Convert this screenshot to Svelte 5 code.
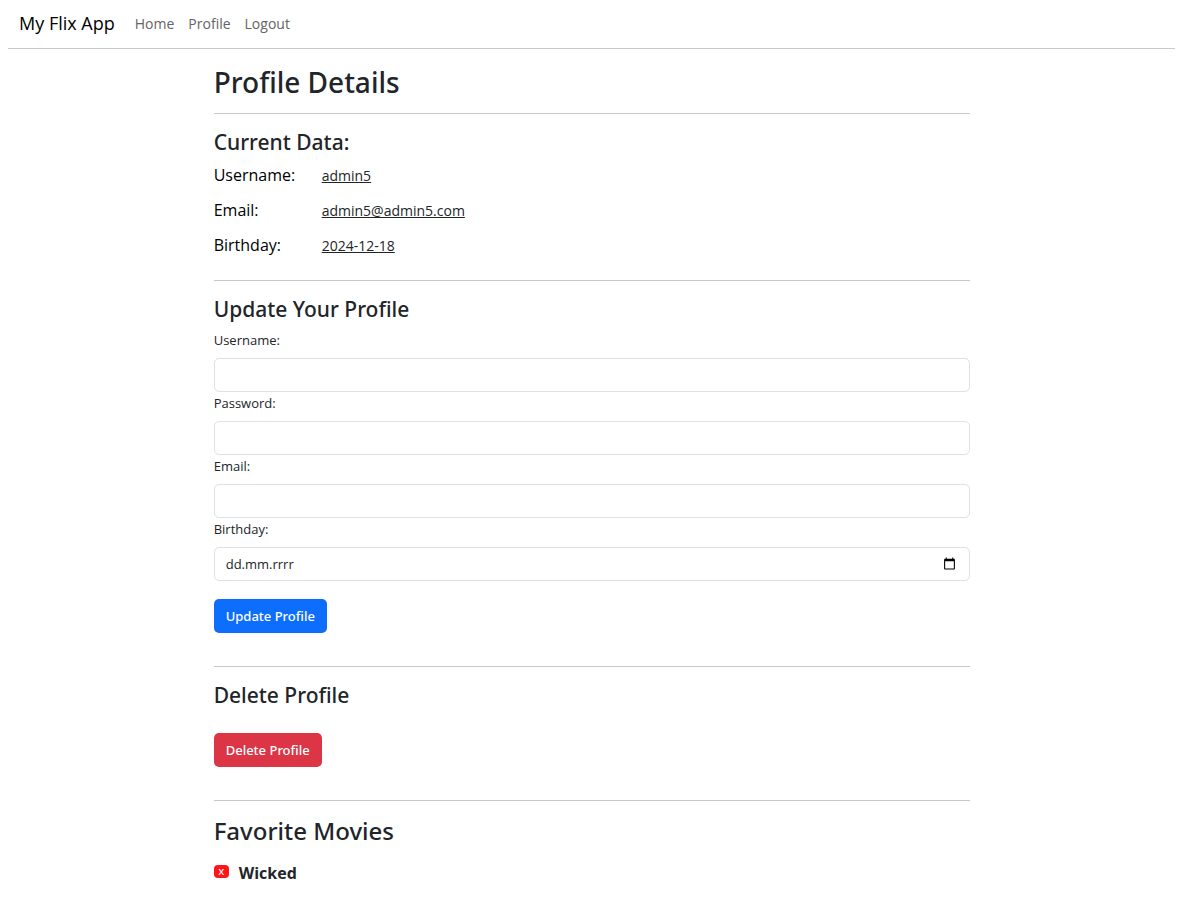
<script>
  const links = ['Home', 'Profile', 'Logout'];
  const current = [
    ['Username:', 'admin5'],
    ['Email:', 'admin5@admin5.com'],
    ['Birthday:', '2024-12-18']
  ];
  const fields = [
    ['username', 'Username:', 'text'],
    ['password', 'Password:', 'password'],
    ['email', 'Email:', 'email']
  ];
  let values = $state({ username: '', password: '', email: '', birthday: '' });
</script>

<div class="page">
  <header>
    <a class="brand" href="#home">My Flix App</a>
    <nav>
      {#each links as link}
        <a href={'#' + link.toLowerCase()}>{link}</a>
      {/each}
    </nav>
  </header>

  <main>
    <h1>Profile Details</h1>

    <section>
      <h2>Current Data:</h2>
      <dl>
        {#each current as [term, value]}
          <div>
            <dt>{term}</dt>
            <dd>{value}</dd>
          </div>
        {/each}
      </dl>
    </section>

    <section>
      <h2>Update Your Profile</h2>
      <form onsubmit={(e) => e.preventDefault()}>
        {#each fields as [id, label, type]}
          <label for={id}>{label}</label>
          <input {id} {type} bind:value={values[id]} />
        {/each}
        <label for="birthday">Birthday:</label>
        <div class="date">
          <input id="birthday" type="text" placeholder="dd.mm.rrrr" bind:value={values.birthday} />
          <svg viewBox="0 0 24 24" aria-hidden="true">
            <path d="M20 3h-1V1h-2v2H7V1H5v2H4c-1.100 0-2 .9-2 2v16c0 1.100.9 2 2 2h16c1.100 0 2-.9 2-2V5c0-1.100-.9-2-2-2zm0 18H4V8h16v13z" />
          </svg>
        </div>
        <button class="btn primary" type="submit">Update Profile</button>
      </form>
    </section>

    <section>
      <h2>Delete Profile</h2>
      <button class="btn danger" type="button">Delete Profile</button>
    </section>

    <section class="favorites">
      <h2>Favorite Movies</h2>
      <ul>
        <li>
          <button class="remove" type="button" aria-label="Remove Wicked">X</button>
          <strong>Wicked</strong>
        </li>
      </ul>
    </section>
  </main>
</div>

<style>
  :global(body) {
    background: #fff;
    color: #212529;
    font-family: 'Segoe UI', 'Open Sans', 'Noto Sans', sans-serif;
    font-size: 14px;
    line-height: 21px;
  }
  :global(*) {
    box-sizing: border-box;
  }
  .page {
    padding-left: 4px;
  }
  header {
    display: flex;
    align-items: center;
    gap: 20px;
    height: 49px;
    margin: 0 5px 0 4px;
    padding: 0 11px 2px;
    border-bottom: 1px solid #c8c9ca;
  }
  a {
    color: #646464;
    text-decoration: none;
  }
  .brand {
    color: #000;
    font-size: 18px;
  }
  nav {
    display: flex;
    gap: 14px;
  }
  main {
    width: calc(64% + 4px);
    margin: 0 auto;
  }
  h1, h2 {
    margin: 0;
    font-family: 'Segoe UI', 'Noto Sans', sans-serif;
    font-weight: 500;
  }
  h1 {
    padding: 15px 0 13px;
    font-size: 28px;
    line-height: 36px;
  }
  section {
    border-top: 1px solid #c8c9ca;
    padding-top: 15px;
  }
  h2 {
    font-size: 21px;
    line-height: 26px;
  }
  dl {
    margin: 0;
    padding: 8px 0 12px;
  }
  dl div {
    display: grid;
    grid-template-columns: 108px 1fr;
    align-items: baseline;
    height: 35px;
  }
  dt {
    color: #000;
    font-size: 16px;
    line-height: 24px;
  }
  dd {
    margin: 0;
    text-decoration: underline;
  }
  form {
    padding: 7px 0 33px;
  }
  label {
    display: block;
    padding: 1px 0 7px;
    font-size: 13px;
  }
  input {
    display: block;
    width: 100%;
    height: 34px;
    padding: 5px 11px;
    border: 1px solid #dee2e6;
    border-radius: 5px;
    background: #fff;
    color: #212529;
    font: inherit;
    font-size: 13px;
  }
  input::placeholder {
    color: #212529;
    opacity: 1;
  }
  .date {
    position: relative;
    margin-bottom: 18px;
  }
  .date svg {
    position: absolute;
    right: 14px;
    top: 10px;
    width: 13px;
    height: 13px;
  }
  .btn {
    display: block;
    height: 34px;
    padding: 0 12px;
    border: 0;
    border-radius: 5px;
    color: #fff;
    font: 500 13px/21px 'Segoe UI', 'Noto Sans', sans-serif;
  }
  .primary {
    background: #0d6efd;
  }
  .danger {
    margin: 25px 0 33px;
    background: #dc3545;
  }
  .favorites h2 {
    font-size: 24px;
    line-height: 30px;
  }
  ul {
    margin: 0;
    padding: 15px 0 12px;
    list-style: none;
  }
  li {
    display: flex;
    align-items: center;
    gap: 10px;
  }
  strong {
    font-size: 16px;
    line-height: 24px;
  }
  .remove {
    width: 15px;
    height: 13px;
    margin-bottom: 3px;
    padding: 0;
    border: 0;
    border-radius: 4px;
    background: #ff1418;
    color: #fff;
    font: 600 9px/12px 'Open Sans', sans-serif;
  }
</style>
